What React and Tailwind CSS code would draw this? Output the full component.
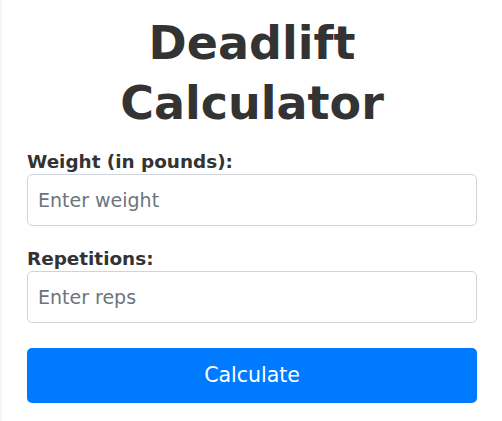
import React, { useState } from 'react';

const App = () => {
  const [weight, setWeight] = useState('');
  const [reps, setReps] = useState('');

  return (
    <div className="min-h-[421px] bg-[#f6f6f6] pl-[2px] font-['DejaVu_Sans',sans-serif] text-[#333]">
      <div className="min-h-[421px] bg-white px-[25px] pt-[13px] pb-[9px]">
        <h1 className="text-center text-[46px] leading-[60px] font-bold">
          Deadlift
          <br />
          Calculator
        </h1>

        <form className="mt-[18px]" onSubmit={(e) => e.preventDefault()}>
          <label className="block text-[18.4px] leading-[22px] font-bold">Weight (in pounds):</label>
          <input
            type="number"
            value={weight}
            onChange={(e) => setWeight(e.target.value)}
            placeholder="Enter weight"
            className="mt-[1px] block h-[52px] w-full rounded-[5px] border border-[#ced4da] px-[10px] text-[19px] placeholder:text-[#6c757d] focus:outline-none"
          />

          <label className="mt-[22px] block text-[18.4px] leading-[22px] font-bold">Repetitions:</label>
          <input
            type="number"
            value={reps}
            onChange={(e) => setReps(e.target.value)}
            placeholder="Enter reps"
            className="mt-[1px] block h-[52px] w-full rounded-[5px] border border-[#ced4da] px-[10px] text-[19px] placeholder:text-[#6c757d] focus:outline-none"
          />

          <button
            type="submit"
            className="mt-[25px] block h-[55px] w-full rounded-[5px] bg-[#007bff] text-[20.5px] text-white"
          >
            Calculate
          </button>
        </form>
      </div>
    </div>
  );
};

export default App;
